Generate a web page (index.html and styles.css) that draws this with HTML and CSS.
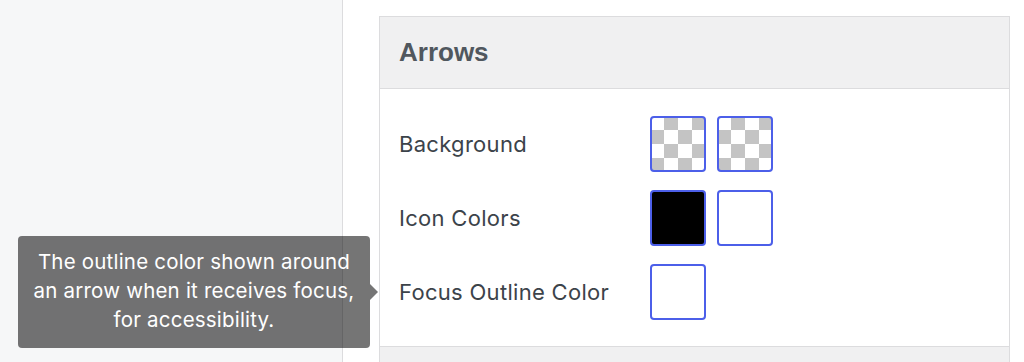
FILE: index.html
```html
<!DOCTYPE html>
<html>
<head>
<meta charset="utf-8">
<link rel="stylesheet" href="styles.css">
</head>
<body>
<div class="layout">
  <aside class="sidebar"></aside>
  <main class="main">
    <section class="panel">
      <header class="panel-head"><h2 class="panel-title">Arrows</h2></header>
      <div class="panel-body">
        <div class="row">
          <span class="label">Background</span>
          <div class="swatches">
            <span class="swatch swatch-empty"></span>
            <span class="swatch swatch-empty"></span>
          </div>
        </div>
        <div class="row">
          <span class="label">Icon Colors</span>
          <div class="swatches">
            <span class="swatch swatch-black"></span>
            <span class="swatch swatch-white"></span>
          </div>
        </div>
        <div class="row">
          <span class="label">Focus Outline Color</span>
          <div class="swatches">
            <span class="swatch swatch-white"></span>
          </div>
        </div>
      </div>
      <div class="panel-next"></div>
    </section>
  </main>
</div>
<div class="tooltip">The outline color shown around an arrow when it receives focus, for accessibility.</div>
</body>
</html>
```

FILE: styles.css
```css
html, body {
  margin: 0;
  padding: 0;
  height: 362px;
  overflow: hidden;
  background: #fff;
  font-family: Inter, "Liberation Sans", Arial, sans-serif;
}

.layout {
  display: flex;
  height: 362px;
}

.sidebar {
  width: 342px;
  flex: none;
  background: #f6f7f8;
  border-right: 1px solid #dcdcde;
}

.main {
  flex: 1;
  padding: 16px 14px 0 36px;
}

.panel {
  border: 1px solid #dcdcde;
  border-bottom: none;
  background: #fff;
}

.panel-head {
  height: 71px;
  background: #f0f0f1;
  border-bottom: 1px solid #dcdcde;
  display: flex;
  align-items: center;
  padding-left: 19px;
}

.panel-title {
  margin: 0;
  font-family: "Liberation Sans", Arial, sans-serif;
  font-weight: 700;
  font-size: 26px;
  color: #50575e;
  letter-spacing: 0;
}

.panel-body {
  display: flex;
  flex-direction: column;
  gap: 18px;
  padding: 27px 20px 26px 19px;
  border-bottom: 1px solid #dcdcde;
}

.row {
  display: flex;
  align-items: center;
  height: 56px;
}

.label {
  width: 251px;
  font-size: 22px;
  letter-spacing: 0.3px;
  color: #3c434a;
}

.swatches {
  display: flex;
  gap: 11px;
}

.swatch {
  box-sizing: border-box;
  width: 56px;
  height: 56px;
  border: 2px solid #4c5fe9;
  border-radius: 4px;
  background: #fff;
}

.swatch-black {
  background: #000;
}

.swatch-empty {
  background-color: #fff;
  background-image: conic-gradient(#c4c4c4 0 25%, #fff 0 50%, #c4c4c4 0 75%, #fff 0);
  background-size: 28px 28px;
  background-position: 12px 12px;
}

.panel-next {
  height: 20px;
  background: #f0f0f1;
}

.tooltip {
  position: absolute;
  left: 18px;
  top: 236px;
  width: 352px;
  height: 112px;
  box-sizing: border-box;
  padding: 11px 8px;
  background: rgba(0, 0, 0, 0.54);
  border-radius: 4px;
  color: #fff;
  font-size: 20.5px;
  letter-spacing: 0.2px;
  line-height: 29px;
  text-align: center;
}

.tooltip::after {
  content: "";
  position: absolute;
  right: -8px;
  top: 48px;
  border-style: solid;
  border-width: 8px 0 8px 8px;
  border-color: transparent transparent transparent rgba(0, 0, 0, 0.54);
}
```
